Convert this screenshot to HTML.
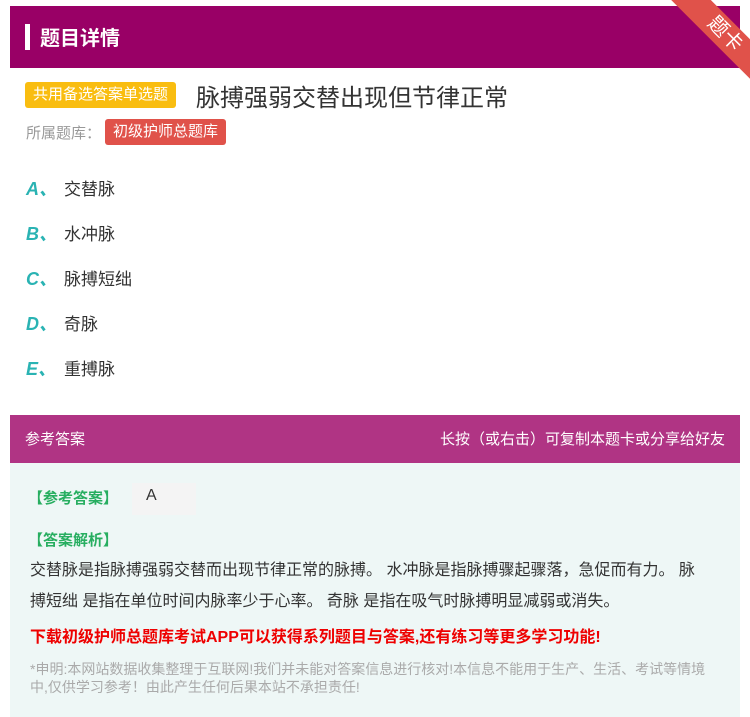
<!DOCTYPE html>
<html><head><meta charset="utf-8"><style>
*{margin:0;padding:0;box-sizing:border-box}
body{width:750px;height:717px;background:#fff;font-family:"Liberation Sans","Noto Sans CJK SC",sans-serif;position:relative;overflow:hidden}
.hd{position:absolute;left:10px;top:6px;width:730px;height:62px;background:#990066}
.hd .bar{position:absolute;left:15px;top:18px;width:5px;height:26px;background:#fff}
.hd .t{position:absolute;left:30px;top:16px;color:#fff;font-size:20px;font-weight:bold}
.rib{position:absolute;width:150px;height:28px;background:#e0524a;transform:rotate(45deg);color:#fff;text-align:center;font-size:20px;line-height:28px}
.tag{position:absolute;background:#f9bd10;color:#fff;font-size:15px;border-radius:3px;padding:0 8px;height:26px;line-height:26px}
.q{position:absolute;left:196px;top:78px;font-size:24px;color:#333}
.opt{position:absolute;left:26px;font-size:17px;color:#333}
.opt b{color:#2ab3b3;font-style:italic;font-size:18px;display:inline-block;width:38px}
.ah{position:absolute;left:10px;top:415px;width:730px;height:48px;background:#b03484;color:#fff;font-size:15px}
.ab{position:absolute;left:10px;top:463px;width:730px;height:254px;background:#eef7f6}
.g{color:#27ae60;font-size:15px;position:absolute;left:18px;font-weight:bold}
</style></head><body>
<div class="hd"><div class="bar"></div><div class="t">题目详情</div></div>
<div style="position:absolute;right:0;top:0;width:90px;height:90px;overflow:hidden"><div class="rib" style="right:-50px;top:20px">题卡</div></div>
<div class="tag" style="left:25px;top:82px">共用备选答案单选题</div>
<div class="q">脉搏强弱交替出现但节律正常</div>
<div style="position:absolute;left:26px;top:122px;font-size:15px;color:#999">所属题库：</div>
<div class="tag" style="left:105px;top:119px;background:#e0524a">初级护师总题库</div>
<div class="opt" style="top:175px"><b>A、</b>交替脉</div>
<div class="opt" style="top:220px"><b>B、</b>水冲脉</div>
<div class="opt" style="top:265px"><b>C、</b>脉搏短绌</div>
<div class="opt" style="top:310px"><b>D、</b>奇脉</div>
<div class="opt" style="top:355px"><b>E、</b>重搏脉</div>
<div class="ah"><span style="position:absolute;left:15px;top:13px">参考答案</span><span style="position:absolute;right:15px;top:13px">长按（或右击）可复制本题卡或分享给好友</span></div>
<div class="ab">
<div class="g" style="top:24px">【参考答案】</div>
<div style="position:absolute;left:122px;top:20px;width:64px;height:32px;background:#f4f4f4;font-size:16px;padding:4px 14px;color:#333">A</div>
<div class="g" style="top:66px">【答案解析】</div>
<div style="position:absolute;left:20px;top:92px;width:680px;font-size:16px;color:#333;line-height:31px">交替脉是指脉搏强弱交替而出现节律正常的脉搏。 水冲脉是指脉搏骤起骤落，急促而有力。 脉搏短绌 是指在单位时间内脉率少于心率。 奇脉 是指在吸气时脉搏明显减弱或消失。</div>
<div style="position:absolute;left:20px;top:160px;font-size:16px;color:#e00;font-weight:bold;white-space:nowrap">下载初级护师总题库考试APP可以获得系列题目与答案,还有练习等更多学习功能!</div>
<div style="position:absolute;left:20px;top:197px;width:690px;font-size:14px;color:#aaa;line-height:18px">*申明:本网站数据收集整理于互联网!我们并未能对答案信息进行核对!本信息不能用于生产、生活、考试等情境中,仅供学习参考！由此产生任何后果本站不承担责任!</div>
</div>
</body></html>
